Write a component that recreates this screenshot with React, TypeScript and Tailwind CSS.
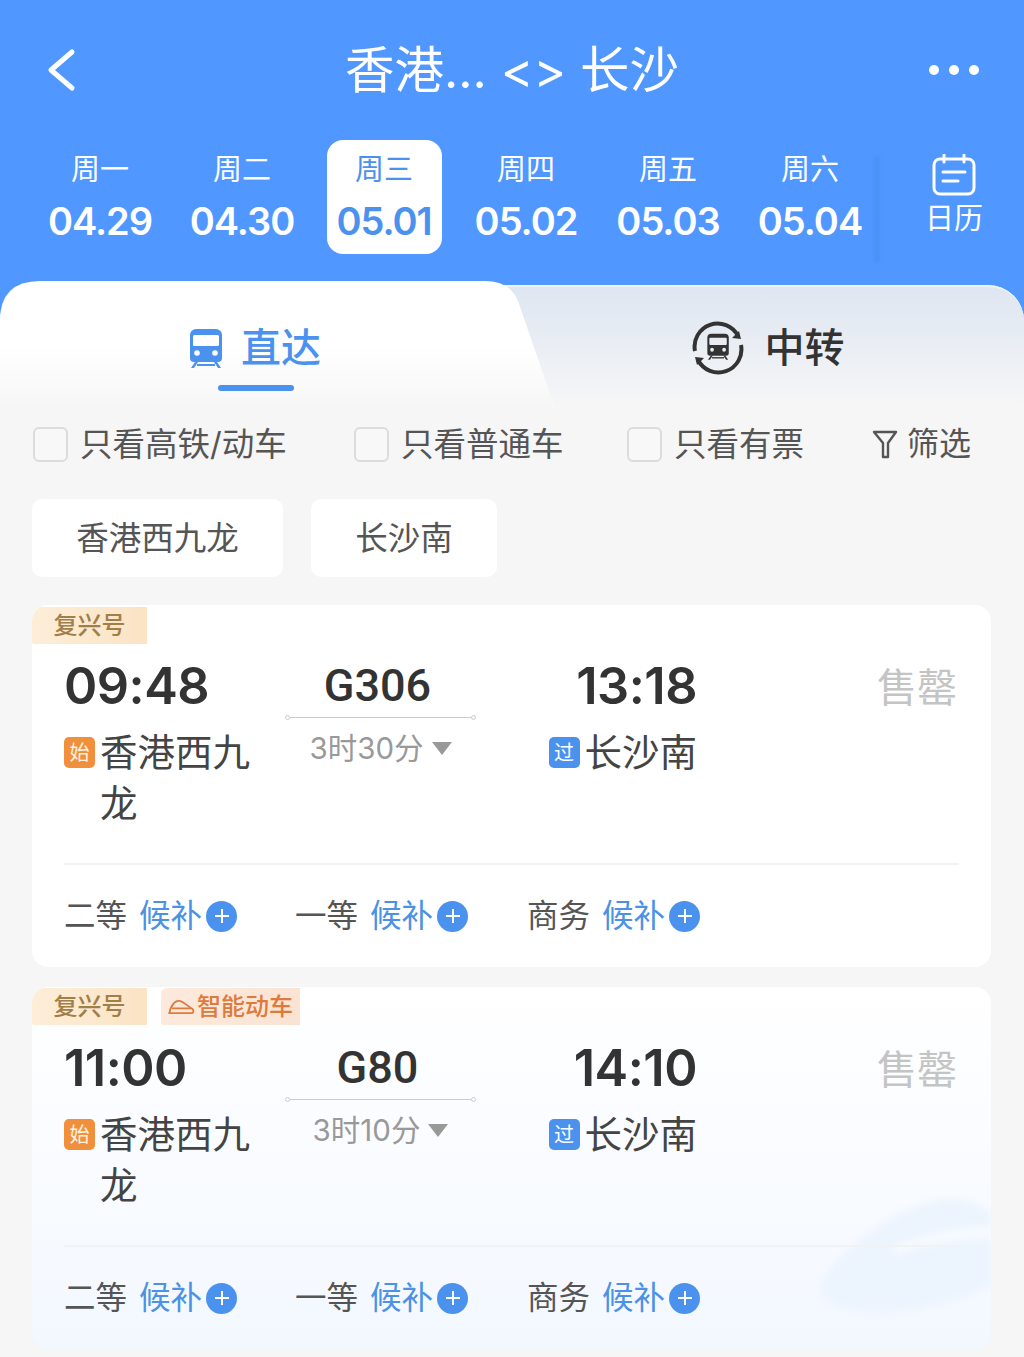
const days = [
  { week: "周一", date: "04.29" },
  { week: "周二", date: "04.30" },
  { week: "周三", date: "05.01", active: true },
  { week: "周四", date: "05.02" },
  { week: "周五", date: "05.03" },
  { week: "周六", date: "05.04" },
];

const seats = ["二等", "一等", "商务"];

function BackIcon() {
  return (
    <svg viewBox="0 0 30 44" className="absolute left-[47px] top-[48px] h-[44px] w-[30px]" fill="none" stroke="#fff" strokeWidth="5" strokeLinecap="round" strokeLinejoin="round">
      <path d="M25 4L4 22l21 18" />
    </svg>
  );
}

function TrainIcon({ className }: { className?: string }) {
  return (
    <svg viewBox="0 0 36 40" className={className} fill="currentColor">
      <path d="M8 1h20a6 6 0 0 1 6 6v23a4 4 0 0 1-4 4H6a4 4 0 0 1-4-4V7a6 6 0 0 1 6-6z" />
      <rect x="5" y="7" width="26" height="11" rx="1.5" fill="#fff" />
      <circle cx="9" cy="25" r="2.8" fill="#fff" />
      <circle cx="27" cy="25" r="2.8" fill="#fff" />
      <path d="M7 34l-4 6h3l4-6zM29 34l4 6h-3l-4-6z" />
      <rect x="9" y="36" width="18" height="2" />
    </svg>
  );
}

function TransferIcon() {
  return (
    <svg viewBox="0 0 54 54" className="h-[54px] w-[54px] text-[#333]">
      <path d="M4 30A23 23 0 0 1 47 15" fill="none" stroke="currentColor" strokeWidth="4" />
      <path d="M50 24A23 23 0 0 1 7 39" fill="none" stroke="currentColor" strokeWidth="4" />
      <path d="M50 18l-9-1 7-7zM4 36l9 1-7 7z" fill="currentColor" />
      <g transform="translate(15 12) scale(0.67)">
        <path d="M8 1h20a6 6 0 0 1 6 6v23a4 4 0 0 1-4 4H6a4 4 0 0 1-4-4V7a6 6 0 0 1 6-6z" fill="currentColor" />
        <rect x="5" y="7" width="26" height="11" rx="1.5" fill="#e8ecf2" />
        <circle cx="9" cy="25" r="2.8" fill="#e8ecf2" />
        <circle cx="27" cy="25" r="2.8" fill="#e8ecf2" />
        <path d="M7 34l-4 6h3l4-6zM29 34l4 6h-3l-4-6z" fill="currentColor" />
        <rect x="9" y="36" width="18" height="2" fill="currentColor" />
      </g>
    </svg>
  );
}

function CalendarIcon() {
  return (
    <svg viewBox="0 0 44 42" className="h-[42px] w-[44px]" fill="none" stroke="#fff" strokeWidth="3">
      <rect x="2" y="5" width="40" height="35" rx="6" />
      <path d="M12 1v7M32 1v7" strokeLinecap="round" />
      <path d="M11 18h22M11 27h15" strokeLinecap="round" />
    </svg>
  );
}

function FilterIcon() {
  return (
    <svg viewBox="0 0 26 30" className="h-[30px] w-[26px]" fill="none" stroke="#555" strokeWidth="2.4" strokeLinejoin="round">
      <path d="M2 3h22l-8 11v14h-5V14z" />
    </svg>
  );
}

function BulletTrainIcon() {
  return (
    <svg viewBox="0 0 28 16" className="h-[15px] w-[27px]" fill="none" stroke="#e0793d" strokeWidth="2">
      <path d="M1 15c1-6 5-13 10-13 5 0 10 6 15 9 1 1 1 4-1 4z" />
      <path d="M4 10h20" />
    </svg>
  );
}

function PlusBadge() {
  return (
    <span className="ml-[4px] flex h-[31px] w-[31px] items-center justify-center rounded-full bg-[#4b92ee]">
      <svg viewBox="0 0 18 18" className="h-[18px] w-[18px]" stroke="#fff" strokeWidth="2">
        <path d="M2 9h14M9 2v14" />
      </svg>
    </span>
  );
}

function Tag({ children, className }: { children: React.ReactNode; className: string }) {
  return (
    <span className={`flex h-[37px] items-center justify-center rounded-bl-[2px] rounded-tl-[6px] text-[24px] font-medium leading-none ${className}`}>
      {children}
    </span>
  );
}

interface TrainCardProps {
  depart: string;
  arrive: string;
  code: string;
  duration: string;
  smart?: boolean;
  tinted?: boolean;
}

function TrainCard({ depart, arrive, code, duration, smart, tinted }: TrainCardProps) {
  return (
    <article
      className={`relative h-[362px] overflow-hidden rounded-[16px] ${
        tinted ? "bg-gradient-to-b from-white to-[#f3f8ff]" : "bg-white"
      }`}
    >
      {tinted && (
        <svg viewBox="0 0 170 130" className="absolute bottom-[26px] right-0 h-[130px] w-[170px] blur-[3px]" fill="#ecf4fd">
          <path d="M0 92C10 70 50 30 100 12c30-10 55-6 70 10v70c-40 20-90 30-130 26C20 116 -4 108 0 92z" />
          <path d="M70 55c25-12 60-22 100-22v14c-40 0-70 6-95 16z" fill="#f6faff" />
        </svg>
      )}
      <div className={`relative flex gap-[14px] ${tinted ? "pt-[1px]" : "pt-[2px]"}`}>
        <Tag className="w-[115px] bg-gradient-to-r from-[#fdeed8] to-[#fbe3c4] text-[#a07f4a]">复兴号</Tag>
        {smart && (
          <Tag className="w-[139px] gap-[2px] bg-gradient-to-r from-[#fdeadc] to-[#fbe3d3] text-[#dd7a3c]">
            <BulletTrainIcon />
            智能动车
          </Tag>
        )}
      </div>
      <div className={`relative grid grid-cols-[221px_191px_221px_1fr] pl-[32px] pr-[34px] ${tinted ? "pt-[10px]" : "pt-[9px]"}`}>
        <div>
          <div className="h-[66px] text-[50.5px] font-semibold leading-[66px] tracking-[-0.5px] text-[#333]">{depart}</div>
          <div className="relative mt-[8px] pl-[36px] pr-[30px] text-[37.5px] leading-[51px] text-[#444]">
            <span className="absolute left-0 top-[10px] flex h-[31px] w-[31px] items-center justify-center rounded-[5px] bg-[#f0903c] text-[20px] leading-none text-[#fff3e4]">
              始
            </span>
            香港西九龙
          </div>
        </div>
        <div className="flex flex-col items-center">
          <div className="mt-[7px] h-[51px] pr-[6px] font-['Roboto',sans-serif] text-[45px] font-medium leading-[51px] text-[#333]">{code}</div>
          <div className="mt-[4px] flex w-full items-center">
            <span className="h-[5px] w-[5px] rounded-full border border-[#ccc]" />
            <span className="h-px flex-1 bg-[#ccc]" />
            <span className="h-[5px] w-[5px] rounded-full border border-[#ccc]" />
          </div>
          <div className="mt-[10px] flex items-center gap-[8px] text-[29.5px] leading-[36px] text-[#999]">
            {duration}
            <span className="h-0 w-0 border-x-[10px] border-t-[13px] border-x-transparent border-t-[#999]" />
          </div>
        </div>
        <div>
          <div className="h-[66px] text-right text-[50.5px] font-semibold leading-[66px] tracking-[-0.5px] text-[#333]">{arrive}</div>
          <div className="mt-[8px] flex h-[51px] items-center justify-end text-[37.5px] leading-[51px] text-[#444]">
            <span className="mr-[5px] flex h-[31px] w-[31px] items-center justify-center rounded-[5px] bg-[#4b92ee] text-[20px] leading-none text-white">
              过
            </span>
            长沙南
          </div>
        </div>
        <div className="mt-[6px] text-right text-[40px] leading-[58px] text-[#c4c4c4]">售罄</div>
      </div>
      <div className="absolute inset-x-[32px] top-[258px] border-t-2 border-[#f1f2f4]" />
      <div className="absolute left-[32px] top-[289px] grid grid-cols-[231px_232px_231px]">
        {seats.map((seat) => (
          <div key={seat} className="flex h-[44px] items-center text-[31.5px] leading-none">
            <span className="text-[#555]">{seat}</span>
            <span className="ml-[12px] text-[#4b92e6]">候补</span>
            <PlusBadge />
          </div>
        ))}
      </div>
    </article>
  );
}

export default function App() {
  return (
    <div className="flex h-[1357px] w-[1024px] flex-col overflow-hidden bg-[#5097ff] font-['Inter','Noto_Sans_CJK_SC',sans-serif]">
      <header className="relative flex h-[140px] shrink-0 items-start justify-center pt-[39px] text-white">
        <BackIcon />
        <h1 className="text-[49.5px] font-normal leading-[62px]">
          香港... &lt;&gt; 长沙
        </h1>
        <div className="absolute right-[45px] top-[65px] flex gap-[10px]">
          <span className="h-[10px] w-[10px] rounded-full bg-white" />
          <span className="h-[10px] w-[10px] rounded-full bg-white" />
          <span className="h-[10px] w-[10px] rounded-full bg-white" />
        </div>
      </header>

      <nav className="flex h-[141px] shrink-0 items-start pl-[29px] text-white">
        {days.map((day) => (
          <div key={day.date} className="flex w-[142px] justify-center">
            <div
              className={`flex h-[114px] w-[115px] flex-col items-center rounded-[16px] pt-[13px] ${
                day.active ? "bg-white text-[#4b92ee]" : ""
              }`}
            >
              <span className="text-[29px] leading-[34px]">{day.week}</span>
              <span className="mt-[11px] text-[38px] font-semibold leading-[46px] tracking-[-1px]">{day.date}</span>
            </div>
          </div>
        ))}
        <div className="relative ml-[1px] flex flex-1 flex-col items-center pl-[2px] pt-[14px]">
          <span className="absolute -left-[8px] top-[16px] h-[106px] w-[6px] bg-[#4b93f8] blur-[1px]" />
          <CalendarIcon />
          <span className="mt-[6px] text-[29px] leading-[34px]">日历</span>
        </div>
      </nav>

      <main className="mt-[4px] flex-1 rounded-t-[36px] bg-[#f6f6f7]">
        <div className="relative h-[121px] rounded-t-[36px] border-t-2 border-[#eef4fb] bg-gradient-to-b from-[#dee6f1] to-[#f6f6f7]">
          <div className="absolute -top-[6px] left-0 h-[130px] w-[560px] bg-gradient-to-b from-white from-50% to-[#f6f6f7] [clip-path:path('M0_40Q0_0_40_0L485_0Q510_0_518_20L556_130L0_130Z')]" />
          <div className="relative grid grid-cols-2 pt-[33px]">
            <div className="-ml-[3px] flex h-[56px] items-center justify-center gap-[17px] font-medium text-[#4b92ee]">
              <TrainIcon className="h-[40px] w-[36px]" />
              <span className="text-[40px] leading-none">直达</span>
            </div>
            <div className="-ml-[1px] flex h-[56px] items-center justify-center gap-[20px] font-medium text-[#333]">
              <TransferIcon />
              <span className="text-[40px] leading-none">中转</span>
            </div>
          </div>
          <div className="absolute left-[218px] top-[98px] h-[6px] w-[76px] rounded-full bg-[#4b92ee]" />
        </div>

        <div className="grid h-[60px] grid-cols-[321px_273px_245px_auto] items-center pl-[33px] pt-[16px] text-[32.5px] leading-[44px] text-[#555]">
          {["只看高铁/动车", "只看普通车", "只看有票"].map((label) => (
            <label key={label} className="flex items-center gap-[12px]">
              <span className="h-[35px] w-[35px] rounded-[6px] border-2 border-[#dcdcdc] bg-[#f8f8f8]" />
              <span className="translate-y-px">{label}</span>
            </label>
          ))}
          <div className="flex items-center gap-[9px] text-[32px]">
            <FilterIcon />
            筛选
          </div>
        </div>

        <div className="flex gap-[28px] px-[32px] pt-[33px] text-[32.5px] text-[#555]">
          <div className="flex h-[78px] w-[251px] items-center justify-center rounded-[10px] bg-white pt-[2px]">香港西九龙</div>
          <div className="flex h-[78px] w-[186px] items-center justify-center rounded-[10px] bg-white pt-[2px]">长沙南</div>
        </div>

        <div className="flex flex-col gap-[20px] pl-[32px] pr-[33px] pt-[28px]">
          <TrainCard depart="09:48" arrive="13:18" code="G306" duration="3时30分" />
          <TrainCard depart="11:00" arrive="14:10" code="G80" duration="3时10分" smart tinted />
        </div>
      </main>
    </div>
  );
}
